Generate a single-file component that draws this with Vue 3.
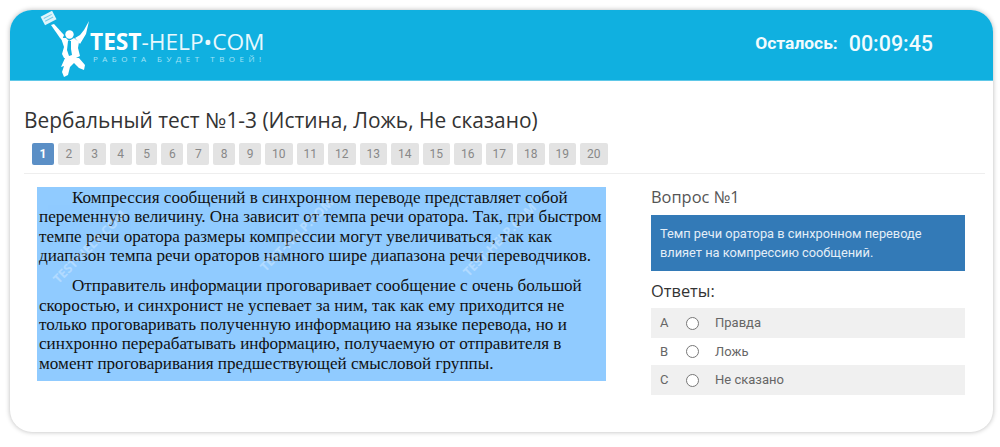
<script setup>
const pages = Array.from({ length: 20 }, (_, i) => i + 1)
const answers = [
  { key: 'A', text: 'Правда' },
  { key: 'B', text: 'Ложь' },
  { key: 'C', text: 'Не сказано' }
]
</script>

<template>
  <div class="page">
    <div class="card">
      <header class="head">
        <div class="logo">
          <svg class="figure" width="50" height="68" viewBox="40 10 50 68">
            <g transform="rotate(-28 48 18)">
              <rect x="42" y="13.5" width="13" height="9.5" fill="#dff5fb"/>
              <path d="M44 16.5h9M44 19.5h9" stroke="#7ccde8" stroke-width="1"/>
            </g>
            <path d="M51 25 L54 24 L64 35 L62 40 L60 38 Z" fill="#fff"/>
            <path d="M89 21 L86 34 L80 44 L75 38 L80 35 L84 30 Z" fill="#fff"/>
            <path d="M61 38 L66 38 L69 41 L74 38 L79 42 L78 48 L80 56 L76 58 L64 58 L62 54 L64 47 Z" fill="#fff"/>
            <path d="M68 41 L71 41 L71 49 L72 55 L69 56 L67 50 Z" fill="#10b0e0"/>
            <circle cx="69.5" cy="34.5" r="4.2" fill="#fff"/>
            <path d="M65 58 L79 58 L85 65 L84 70 L79 68 L74 63 L70 67 L68 75 L64 77 L62 72 L64 66 L61 67 Z" fill="#fff"/>
          </svg>
          <div class="brand">
            <div class="brand-name"><b>TEST</b>-HELP•COM</div>
            <div class="brand-sub">РАБОТА БУДЕТ ТВОЕЙ!</div>
          </div>
        </div>
        <div class="timer"><span class="timer-label">Осталось:</span><span class="timer-value">00:09:45</span></div>
      </header>

      <h1 class="title">Вербальный тест №1-3 (Истина, Ложь, Не сказано)</h1>
      <nav class="pager">
        <span v-for="p in pages" :key="p" class="pg" :class="{ active: p === 1, wide: p > 9 }">{{ p }}</span>
      </nav>
      <div class="rule"></div>

      <main class="body">
        <section class="passage">
          <p>Компрессия сообщений в синхронном переводе представляет собой переменную величину. Она зависит от темпа речи оратора. Так, при быстром темпе речи оратора размеры компрессии могут увеличиваться, так как диапазон темпа речи ораторов намного шире диапазона речи переводчиков.</p>
          <p>Отправитель информации проговаривает сообщение с очень большой скоростью, и синхронист не успевает за ним, так как ему приходится не только проговаривать полученную информацию на языке перевода, но и синхронно перерабатывать информацию, получаемую от отправителя в момент проговаривания предшествующей смысловой группы.</p>
          <span class="wm wm1">TEST-HELP.COM</span>
          <span class="wm wm2">TEST-HELP.COM</span>
          <span class="wm wm3">TEST-HELP.COM</span>
        </section>
        <aside class="side">
          <h2 class="q">Вопрос №1</h2>
          <div class="qbox">Темп речи оратора в синхронном переводе влияет на компрессию сообщений.</div>
          <h2 class="a">Ответы:</h2>
          <div class="answers">
            <div v-for="a in answers" :key="a.key" class="row">
              <span class="key">{{ a.key }}</span>
              <span class="radio"></span>
              <span class="txt">{{ a.text }}</span>
            </div>
          </div>
        </aside>
      </main>
    </div>
  </div>
</template>

<style>
html, body { margin: 0; background: #fff; }
</style>

<style scoped>
.page { width: 1000px; height: 447px; padding: 10px 7px 0 10px; box-sizing: border-box; overflow: hidden; }
.card { width: 983px; height: 422px; border-radius: 22px; background: #fff; box-shadow: 0 0 5px rgba(0,0,0,.28); overflow: hidden; }
.head { height: 71px; background: #10b0e0; border-bottom: 1px solid #5ec8e8; box-sizing: border-box; display: flex; align-items: center; justify-content: space-between; padding: 0 60px 0 30px; color: #fff; }
.logo { display: flex; align-items: flex-start; height: 70px; }
.figure { margin-top: 0; flex: none; }
.brand { margin: 20px 0 0 0; }
.brand-name { font: 400 22.7px/24px "Open Sans", sans-serif; color: #e8f8fd; white-space: nowrap; }
.brand-name b { font-weight: 700; color: #fff; }
.brand-sub { font: 400 8px/9px "Open Sans", sans-serif; letter-spacing: 4.5px; color: #a5e3f6; margin: 0 0 0 3px; white-space: nowrap; }
.timer { display: flex; align-items: center; gap: 11px; font-family: Roboto, sans-serif; font-weight: 700; color: #f2fbfe; margin-top: -4px; }
.timer-label { font-size: 17.4px; }
.timer-value { font-size: 21.4px; font-weight: 500; }
.title { margin: 26px 0 0 14px; font: 400 20.9px/27px "Open Sans", sans-serif; color: #333; white-space: nowrap; }
.pager { display: flex; gap: 4px; margin: 9px 0 0 22px; }
.pg { width: 21.9px; height: 22px; border-radius: 2px; background: #e3e3e3; color: #888; font: 400 12px/22px Roboto, sans-serif; text-align: center; }
.pg.wide { width: 27.5px; }
.pg.active { background: #5b8fc6; color: #fff; font-weight: 700; }
.rule { height: 1px; background: #eee; margin: 8px 8px 0 14px; }
.body { display: flex; padding: 13px 0 0 27px; }
.passage { position: relative; width: 569px; height: 194px; box-sizing: border-box; background: #90cbff; padding: 1px 0 0 2px; font: 400 17.13px/19.35px "Liberation Serif", serif; color: #111; overflow: hidden; flex: none; }
.passage p { margin: 0 0 11px; text-indent: 33px; }
.wm { position: absolute; width: 110px; text-align: center; color: #fff; opacity: .3; font: 700 12.5px/14px "Open Sans", sans-serif; transform: rotate(-45deg); white-space: nowrap; }
.wm1 { left: -2px; top: 53px; }
.wm2 { left: 205px; top: 41px; }
.wm3 { left: 408px; top: 46px; }
.side { width: 314px; margin-left: 45px; }
.q, .a { margin: 0; font: 400 16.4px/22px "Open Sans", sans-serif; }
.q { color: #555; line-height: 20px; }
.a { color: #333; margin-top: 9px; }
.qbox { margin-top: 8px; height: 56px; box-sizing: border-box; background: #337ab7; color: #e4eef7; padding: 9px 9px; font: 400 12.8px/19px Roboto, sans-serif; }
.answers { margin-top: 6px; }
.row { display: flex; align-items: center; height: 30px; font: 400 13px/16px Roboto, sans-serif; color: #666; }
.row:nth-child(odd) { background: #f0f0f0; }
.row:nth-child(2) { height: 27px; background: #fff; }
.key { width: 35px; padding-left: 9px; box-sizing: border-box; }
.radio { width: 11px; height: 11px; border: 1px solid #777; border-radius: 50%; background: #fff; flex: none; }
.txt { margin-left: 16px; }
</style>
